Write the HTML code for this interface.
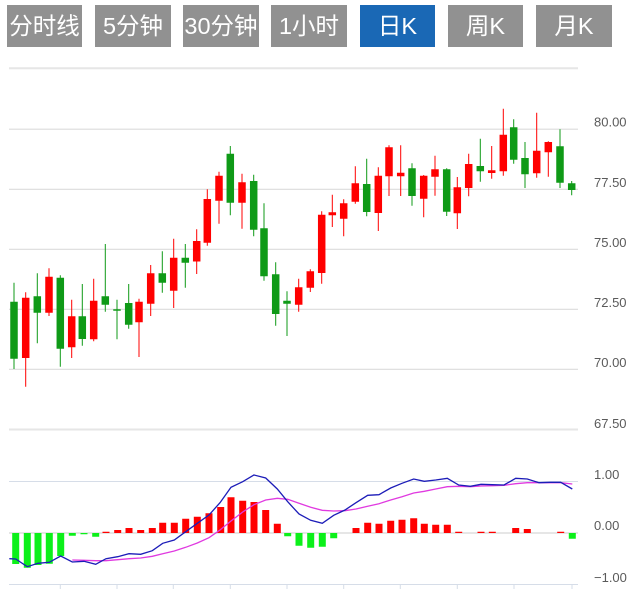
<!DOCTYPE html>
<html><head><meta charset="utf-8"><style>
html,body{margin:0;padding:0;background:#fff;width:633px;height:589px;overflow:hidden}
.b{position:absolute;top:5px;height:42px;line-height:42px;background:#919191;color:#fff;text-align:center;font:23.5px/42px "Liberation Sans","Noto Sans CJK SC",sans-serif;white-space:nowrap}
.a{background:#1a68b5}
svg{position:absolute;left:0;top:0}
text{font:13px "Liberation Sans",sans-serif;fill:#5a5a5a}
</style></head><body>
<div class="b" style="left:7px;width:75px">分时线</div>
<div class="b" style="left:95px;width:76px">5分钟</div>
<div class="b" style="left:183px;width:76px">30分钟</div>
<div class="b" style="left:271px;width:76px">1小时</div>
<div class="b a" style="left:360px;width:75px">日K</div>
<div class="b" style="left:448px;width:75px">周K</div>
<div class="b" style="left:536px;width:76px">月K</div>
<svg width="633" height="589" viewBox="0 0 633 589" fill="none">
<path d="M9 68.3H578M9 429.5H578M9 533H578" stroke="#e6e6e6" stroke-width="2"/>
<path d="M9 129.2H578M9 189.3H578M9 249.3H578M9 309.3H578M9 369.3H578" stroke="#dcdcdc" stroke-width="1.2"/>
<path d="M9 481.5H578M9 584.5H578M60.3 584V590M117 584V590M173.3 584V590M230.3 584V590M287 584V590M343.7 584V590M400.3 584V590M457.3 584V590M514 584V590M572 584V590" stroke="#d6dde8" stroke-width="1"/>
<!-- green wicks -->
<path stroke="#0f9a17" stroke-width="1" d="M14 282.7V369M37.3 273.3V343.3M60.3 275.3V366.7M82.3 284V345.7M105.3 244V311.7M117 299.7V339.3M128.7 284V328.7M162.3 251.3V292.7M185.3 244V287.7M230.3 146V215.3M253.7 174.7V236.3M264 203.3V280.7M275.7 262.3V325.7M287 291.3V336M366.7 158.7V216.3M412 163.3V205.7M446.7 168.3V216M480.3 138.7V181.7M513.7 119.3V163.7M525 142V188M560 129.3V188M571.7 181V195.3"/>
<!-- red wicks -->
<path stroke="#f00" stroke-width="1" d="M25.7 292.3V386.7M49 268.3V316M71.7 299.7V358M93.7 278.7V341.3M139 298.7V357M150.7 265V316M173.7 238.7V308M196.7 229.3V274M207.3 189.3V245.7M219 171.7V223.7M242 173.7V228.7M298.7 278.7V311.7M310.3 269.3V292M321.7 211.3V283.7M332.3 194.7V227M343.7 199.3V236.3M355.3 166.3V203.7M378.3 167.3V231M389 145.3V196M400.7 145.3V196M423.7 175V217.3M435 155.7V195.7M457.3 177V229M468.7 153.7V196.3M491.7 146V178.7M503.3 108.7V175.7M536.7 112.7V177.7M548.3 141.3V176.7"/>
<!-- green bodies -->
<path stroke="#0f9a17" stroke-width="7.5" d="M14 301.7V358.7M37.3 296.3V312.7M60.3 277.7V348.7M82.3 316.3V339M105.3 296.3V304.7M117 309.3V310.7M128.7 303V324.7M162.3 273.3V282.7M185.3 257.7V262.7M230.3 153.7V202.7M253.7 181V229.7M264 228.3V276.3M275.7 274.3V314M287 300.7V303.7M366.7 184V212M412 168.3V196M446.7 169.3V211.7M480.3 166V171.3M513.7 127.3V159.7M525 158V174.3M560 146.3V182.7M571.7 183.3V190"/>
<!-- red bodies -->
<path stroke="#f00" stroke-width="7.5" d="M25.7 297.7V358M49 276.7V312.7M71.7 316.3V347.3M93.7 300.7V339.3M139 301.7V322.3M150.7 273.3V303.7M173.7 257.7V290.7M196.7 241V261.5M207.3 199V242.7M219 175.7V200.7M242 182.3V202.7M298.7 287.3V304.7M310.3 271.3V287.7M321.7 214.7V273M332.3 212.3V215.3M343.7 203.3V218.7M355.3 183.3V201.7M378.3 175.7V213M389 147.3V176.3M400.7 172.7V176.3M423.7 175.7V198.7M435 169.3V176.7M457.3 187.3V213.3M468.7 164V188M491.7 170.3V173M503.3 134.7V171.3M536.7 150.7V173.3M548.3 142V152.3"/>
<!-- MACD bars -->
<path stroke="#0cf01a" stroke-width="7" d="M15.7 533V564M27.3 533V567.7M38 533V565M49.3 533V563.7M60.7 533V556M72.3 533V535.7M84 533V534.3M95.7 533V536.7M287.7 533V536.3M299 533V545.7M310.7 533V547.7M322.3 533V546.7M333.7 533V538.3M572.3 533V538.7"/>
<path stroke="#f00" stroke-width="7" d="M106 533V531.7M117.7 533V530M129 533V528M140.7 533V530M152.3 533V528M162.7 533V522.7M174.3 533V522.7M185.7 533V518.7M197.3 533V516.7M209 533V513.3M220.7 533V507M231 533V497.3M242.7 533V500.7M254 533V502M265.7 533V510M277.3 533V523.7M356 533V528M367.7 533V522.7M379 533V523.7M390.7 533V520.7M402 533V519.7M413.7 533V518.3M424.3 533V523.7M435.7 533V524.7M447.3 533V524.7M458.7 533V531.7M481 533V531.7M492.3 533V531.7M515.7 533V528M527.3 533V529M560.7 533V531.7"/>
<polyline stroke="#e03ae0" stroke-width="1.3" points="72.3,560 84,560.3 95.7,560.7 106,560.7 117.7,559.7 129,558.7 140.7,558 152.3,556.3 162.7,553.7 174.3,551 185.7,547.3 197.3,543 209,537.7 220,530 231,521 242.7,512 254,504.7 265.7,500 277.3,498.3 287.7,499.3 299,503.3 310.7,507.3 322.3,510.3 333.7,511 345,510.7 356,509 367.7,506.3 379,503.7 390.7,500 402,496.7 413.7,493 424.3,491.3 435.7,489 447.3,486.7 458.7,486.3 470.3,486.7 481,486 492.3,485.7 504,485.3 515.7,483.7 527.3,482.7 539,482.7 550.3,482.7 560.7,482.7 572.3,484"/>
<polyline stroke="#1c1cb8" stroke-width="1.3" points="9.3,558.7 15.7,559 27.3,566.7 38,563.3 49.3,562.3 60.7,556 72.3,562 84,561.3 95.7,564.3 106,558.7 117.7,556.7 129,553.7 140.7,554.3 152.3,550.7 162.7,543.3 174.3,540 185.7,531.7 197.3,523.3 209,515 220,502.7 231,487.3 242.7,481.7 254,475 265.7,478 277.3,489 287.7,501.7 299,514 310.7,520.3 322.3,523.3 333.7,515.3 345,510 356,502.7 367.7,495.3 379,494.7 390.7,488 402,483.3 413.7,479 424.3,481.3 435.7,480 447.3,478.3 458.7,485 470.3,486.3 481,484.3 492.3,484.7 504,485 515.7,478.3 527.3,479 539,482.7 550.3,482.3 560.7,482.3 572.3,489"/>
<text x="594" y="126.5">80.00</text>
<text x="594" y="187">77.50</text>
<text x="594" y="247">75.00</text>
<text x="594" y="307">72.50</text>
<text x="594" y="367">70.00</text>
<text x="594" y="428">67.50</text>
<text x="594" y="479">1.00</text>
<text x="594" y="530">0.00</text>
<text x="594" y="582">−1.00</text>
</svg>
</body></html>
